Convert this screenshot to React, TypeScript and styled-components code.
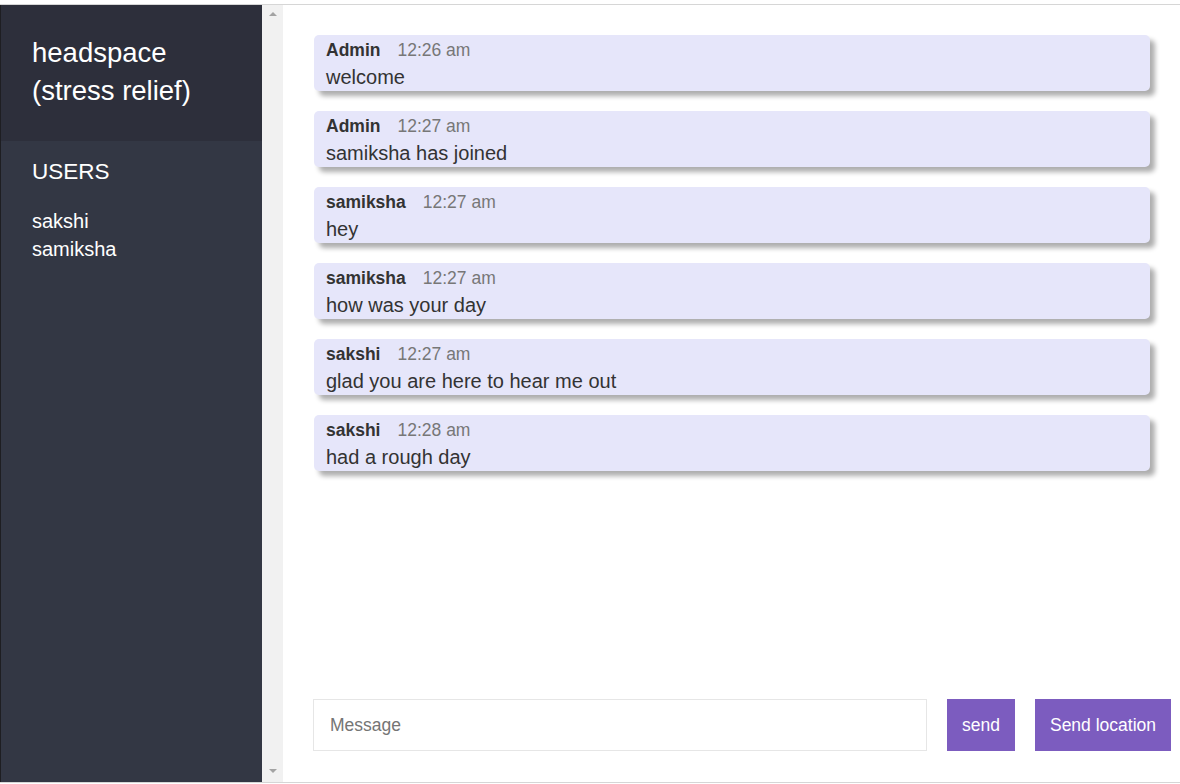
import React from 'react';
import styled, { createGlobalStyle } from 'styled-components';

type Message = { id: number; user: string; time: string; text: string };

const messages: Message[] = [
  { id: 1, user: 'Admin', time: '12:26 am', text: 'welcome' },
  { id: 2, user: 'Admin', time: '12:27 am', text: 'samiksha has joined' },
  { id: 3, user: 'samiksha', time: '12:27 am', text: 'hey' },
  { id: 4, user: 'samiksha', time: '12:27 am', text: 'how was your day' },
  { id: 5, user: 'sakshi', time: '12:27 am', text: 'glad you are here to hear me out' },
  { id: 6, user: 'sakshi', time: '12:28 am', text: 'had a rough day' },
];

const users = ['sakshi', 'samiksha'];

const GlobalStyle = createGlobalStyle`
  html, body {
    margin: 0;
    padding: 0;
    background: #fff;
    font-family: "Liberation Sans", Arial, sans-serif;
  }
  * { box-sizing: border-box; }
`;

const Frame = styled.div`
  padding-top: 4px;
  height: 784px;
  background: #fff;
`;

const Chat = styled.div`
  display: flex;
  height: 779px;
  border-top: 1px solid #d6d6d6;
  border-bottom: 1px solid #d6d6d6;
`;

const Sidebar = styled.aside`
  width: 262px;
  flex-shrink: 0;
  background: #333744;
  color: #fff;
  border-left: 1px solid #1e1e22;
  display: flex;
  flex-direction: column;
`;

const RoomTitle = styled.h2`
  margin: 0;
  height: 136px;
  background: #2d2f3b;
  padding: 29px 31px 0;
  font-size: 27.5px;
  font-weight: 400;
  line-height: 38px;
`;

const ListTitle = styled.h3`
  margin: 0;
  padding: 18px 31px 0;
  font-size: 22.5px;
  font-weight: 400;
  line-height: 26px;
`;

const UserList = styled.ul`
  list-style: none;
  margin: 0;
  padding: 22px 31px 0;
  font-size: 20px;
  line-height: 28px;
`;

const Scrollbar = styled.div`
  width: 21px;
  flex-shrink: 0;
  background: #f1f1f1;
  display: flex;
  flex-direction: column;
  justify-content: space-between;
  align-items: center;
  padding: 7px 0 9px;
`;

const Arrow = styled.span<{ $down?: boolean }>`
  width: 0;
  height: 0;
  border-left: 4px solid transparent;
  border-right: 4px solid transparent;
  ${({ $down }) =>
    $down ? 'border-top: 4px solid #a3a3a3;' : 'border-bottom: 4px solid #a3a3a3;'}
`;

const Main = styled.main`
  flex: 1;
  display: flex;
  flex-direction: column;
  padding: 30px 9px 30px 30px;
`;

const Messages = styled.div`
  flex: 1;
  display: flex;
  flex-direction: column;
  gap: 20px;
  padding-left: 1px;
  padding-right: 21px;
`;

const Bubble = styled.div`
  background: #e6e6fa;
  border-radius: 5px;
  padding: 5px 12px 2px;
  box-shadow: 5px 5px 5px rgba(0, 0, 0, 0.32);
  color: #333;
`;

const Meta = styled.div`
  font-size: 17.5px;
  line-height: 20px;
`;

const Name = styled.span`
  font-weight: 700;
  margin-right: 17px;
`;

const Time = styled.span`
  color: #777;
`;

const Text = styled.p`
  margin: 5px 0 0;
  font-size: 20px;
  line-height: 24px;
`;

const Composer = styled.form`
  display: flex;
  gap: 20px;
  height: 52px;
  margin-bottom: 1px;
`;

const Input = styled.input`
  width: 614px;
  border: 1px solid #e6e6e6;
  padding: 0 16px;
  font-size: 17.5px;
  font-family: inherit;
  color: #333;
  outline: none;
  &::placeholder { color: #757575; }
`;

const Button = styled.button<{ $wide?: boolean }>`
  width: ${({ $wide }) => ($wide ? '136px' : '68px')};
  border: none;
  background: #7c5cbf;
  color: #fff;
  font-family: inherit;
  font-size: 17.5px;
  cursor: pointer;
`;

export default function App() {
  return (
    <Frame>
      <GlobalStyle />
      <Chat>
        <Sidebar>
          <RoomTitle>headspace<br />(stress relief)</RoomTitle>
          <ListTitle>USERS</ListTitle>
          <UserList>
            {users.map((u) => (
              <li key={u}>{u}</li>
            ))}
          </UserList>
        </Sidebar>
        <Scrollbar>
          <Arrow />
          <Arrow $down />
        </Scrollbar>
        <Main>
          <Messages>
            {messages.map((m) => (
              <Bubble key={m.id}>
                <Meta>
                  <Name>{m.user}</Name>
                  <Time>{m.time}</Time>
                </Meta>
                <Text>{m.text}</Text>
              </Bubble>
            ))}
          </Messages>
          <Composer onSubmit={(e) => e.preventDefault()}>
            <Input placeholder="Message" />
            <Button type="submit">send</Button>
            <Button type="button" $wide>Send location</Button>
          </Composer>
        </Main>
      </Chat>
    </Frame>
  );
}
